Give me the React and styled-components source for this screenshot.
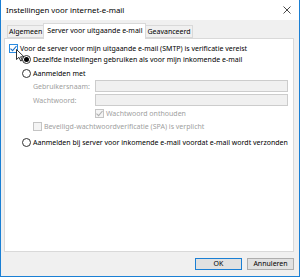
import React from 'react';
import styled, { createGlobalStyle } from 'styled-components';

const Global = createGlobalStyle`
  html, body { margin: 0; padding: 0; background: #f0f0f0; }
  body { font-family: 'Noto Sans', 'Open Sans', sans-serif; }
  * { box-sizing: border-box; }
`

const Window = styled.div`
  position: relative;
  width: 300px;
  height: 277px;
  background: #f0f0f0;
  border: 1px solid #1a7fd4;
  border-top: none;
  display: flex;
  flex-direction: column;
`

const TitleBar = styled.div`
  height: 20px;
  background: #fff;
  display: flex;
  align-items: center;
  justify-content: space-between;
  padding: 0 8px 0 5px;
  font-size: 7.8px;
  color: #000;
`

const Body = styled.div`
  padding: 0 5px 0 3px;
  display: flex;
  flex-direction: column;
`

const Tabs = styled.div`
  height: 18px;
  display: flex;
  align-items: flex-end;
  padding-left: 3px;
`

const Tab = styled.div`
  position: relative;
  height: ${p => (p.active ? '16px' : '13px')};
  margin-bottom: ${p => (p.active ? '-1px' : '0')};
  padding: 0 ${p => (p.active ? 3 : 1)}px;
  border: 1px solid #d9d9d9;
  border-bottom: ${p => (p.active ? 'none' : '1px solid #d9d9d9')};
  border-left: ${p => (p.first || p.active ? '1px solid #d9d9d9' : 'none')};
  border-right: ${p => (p.active || p.last ? '1px solid #d9d9d9' : 'none')};
  background: ${p => (p.active ? '#fff' : '#f0f0f0')};
  z-index: ${p => (p.active ? 2 : 1)};
  font-size: 7px;
  line-height: ${p => (p.active ? '13px' : '11px')};
  color: #000;
  white-space: nowrap;
`

const Panel = styled.div`
  position: relative;
  z-index: 1;
  height: 214px;
  background: #fff;
  border: 1px solid #d9d9d9;
  padding: 3px 0 0 4px;
  display: flex;
  flex-direction: column;
`

const Row = styled.div`
  display: flex;
  align-items: center;
  height: ${p => p.h || 11}px;
  margin-top: ${p => p.mt || 0}px;
  padding-left: ${p => p.indent || 0}px;
  font-size: 7px;
  color: ${p => (p.disabled ? '#a0a0a0' : '#000')};
  white-space: nowrap;
`

const Box = styled.span`
  width: 9px;
  height: 9px;
  flex: none;
  margin-right: 2px;
  border: 1px solid ${p => (p.blue ? '#2a8ae0' : p.disabled ? '#c4c4c4' : '#333')};
  background: ${p => (p.disabled ? '#f4f4f4' : '#fff')};
  display: flex;
  align-items: center;
  justify-content: center;
`

const Radio = styled.span`
  width: 9px;
  height: 9px;
  flex: none;
  margin-right: 2px;
  border: 1px solid #333;
  border-radius: 50%;
  background: #fff;
  display: flex;
  align-items: center;
  justify-content: center;
  &::after {
    content: '';
    display: ${p => (p.checked ? 'block' : 'none')};
    width: 5px;
    height: 5px;
    border-radius: 50%;
    background: #000;
  }
`

const Label = styled.span`
  width: 62px;
  flex: none;
`

const Input = styled.div`
  width: 193px;
  height: 12px;
  border: 1px solid #ccc;
  background: #f0f0f0;
`

const Footer = styled.div`
  display: flex;
  justify-content: flex-end;
  gap: 5px;
  padding-top: 6px;
`

const Button = styled.div`
  width: 47px;
  height: 12px;
  border: 1px solid ${p => (p.primary ? '#1a7fd4' : '#adadad')};
  background: #e1e1e1;
  font-size: 7px;
  line-height: 10px;
  text-align: center;
  color: #000;
`

const Cursor = styled.svg`
  position: absolute;
  left: 15px;
  top: 49px;
  z-index: 5;
`

const Check = ({ color }) => (
  <svg width="7" height="7" viewBox="0 0 7 7">
    <path d="M0.5 3.6 L2.6 5.6 L6.5 1" fill="none" stroke={color} strokeWidth="1.1" />
  </svg>
)

export default function App() {
  return (
    <>
      <Global />
      <Window>
        <TitleBar>
          <span>Instellingen voor internet-e-mail</span>
          <svg width="8" height="8" viewBox="0 0 8 8">
            <path d="M0.5 0.5 L7.5 7.5 M7.5 0.5 L0.5 7.5" stroke="#333" strokeWidth="0.9" />
          </svg>
        </TitleBar>
        <Body>
          <Tabs>
            <Tab first>Algemeen</Tab>
            <Tab active>Server voor uitgaande e-mail</Tab>
            <Tab last>Geavanceerd</Tab>
          </Tabs>
          <Panel>
            <Row h={11} mt={1}>
              <Box blue><Check color="#1a6fc4" /></Box>
              Voor de server voor mijn uitgaande e-mail (SMTP) is verificatie vereist
            </Row>
            <Row h={10} indent={13}>
              <Radio checked />
              Dezelfde instellingen gebruiken als voor mijn inkomende e-mail
            </Row>
            <Row h={10} mt={4} indent={13}>
              <Radio />
              Aanmelden met
            </Row>
            <Row h={12} mt={2} indent={24} disabled>
              <Label>Gebruikersnaam:</Label>
              <Input />
            </Row>
            <Row h={12} mt={2} indent={24} disabled>
              <Label>Wachtwoord:</Label>
              <Input />
            </Row>
            <Row h={10} mt={2} indent={86} disabled>
              <Box disabled><Check color="#b0b0b0" /></Box>
              Wachtwoord onthouden
            </Row>
            <Row h={10} mt={3} indent={24} disabled>
              <Box disabled />
              Beveiligd-wachtwoordverificatie (SPA) is verplicht
            </Row>
            <Row h={10} mt={6} indent={13}>
              <Radio />
              Aanmelden bij server voor inkomende e-mail voordat e-mail wordt verzonden
            </Row>
          </Panel>
          <Footer>
            <Button primary>OK</Button>
            <Button>Annuleren</Button>
          </Footer>
        </Body>
        <Cursor width="9" height="13" viewBox="0 0 9 13">
          <path d="M0.5 0.5 L0.5 10.5 L3 8.3 L4.7 12 L6.2 11.3 L4.6 7.8 L8 7.8 Z" fill="#fff" stroke="#000" strokeWidth="0.8" />
        </Cursor>
      </Window>
    </>
  );
}
